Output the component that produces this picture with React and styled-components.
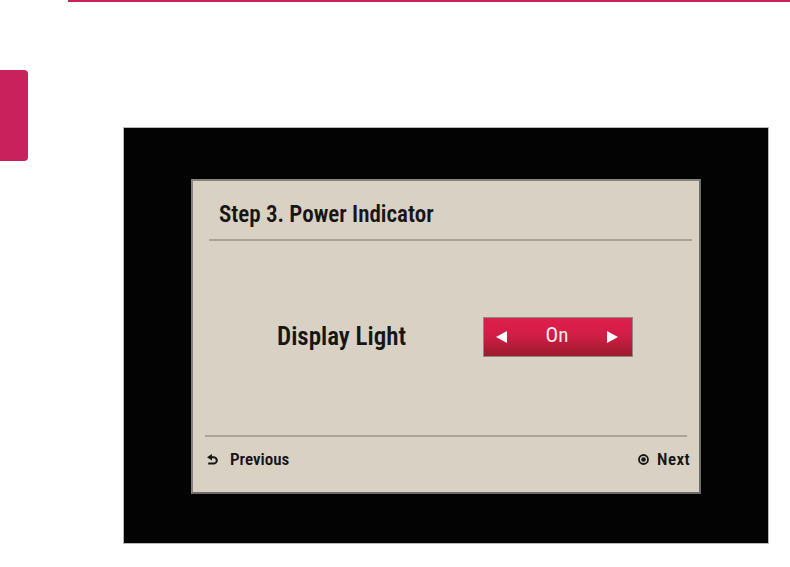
import React from 'react'
import styled, { createGlobalStyle } from 'styled-components'

const Global = createGlobalStyle`
  html, body {
    margin: 0;
    padding: 0;
    background: #fff;
  }
  body {
    font-family: Roboto, "Liberation Sans", sans-serif;
    font-stretch: 75%;
  }
`

const Page = styled.div`
  width: 790px;
  height: 567px;
  overflow: hidden;
`

const TopRule = styled.div`
  margin-left: 68px;
  height: 2px;
  background: #c9215b;
`

const Main = styled.div`
  display: flex;
  align-items: flex-start;
`

const SideTab = styled.div`
  width: 28px;
  height: 91px;
  margin-top: 68px;
  background: #c9215b;
  border-radius: 0 4px 4px 0;
`

const Screen = styled.div`
  box-sizing: border-box;
  width: 646px;
  height: 417px;
  margin-left: 95px;
  margin-top: 125px;
  padding: 51px 0 0 67px;
  background: #030303;
  border: 1px solid #b8b8b8;
`

const Dialog = styled.div`
  box-sizing: border-box;
  width: 510px;
  height: 315px;
  display: flex;
  flex-direction: column;
  background: #d9d1c4;
  border: 2px solid #86837e;
  border-right-color: #6f6c68;
  border-bottom-color: #6f6c68;
  color: #161616;
`

const Header = styled.div`
  box-sizing: border-box;
  height: 58px;
  padding: 21px 0 0 26px;
  font-size: 23px;
  font-weight: 600;
  line-height: 26px;
`

const Rule = styled.div`
  height: 2px;
  background: #aaa498;
  margin: ${p => p.$inset};
`

const Body = styled.div`
  flex: 1;
  display: flex;
  align-items: center;
  padding-left: 84px;
  padding-bottom: 3px;
`

const Label = styled.div`
  width: 206px;
  font-size: 25px;
  font-weight: 600;
`

const Selector = styled.div`
  box-sizing: border-box;
  width: 150px;
  height: 40px;
  display: flex;
  align-items: center;
  justify-content: space-between;
  padding: 0 14px 0 12px;
  background: linear-gradient(#de1f4c 0%, #d21d46 45%, #9b1a2b 100%);
  border: 1px solid #8f8a86;
  color: #fbeef0;
  font-size: 21px;
`

const Value = styled.span`
  line-height: 1;
  margin-top: -2px;
`

const Footer = styled.div`
  box-sizing: border-box;
  height: 55px;
  display: flex;
  align-items: flex-start;
  justify-content: space-between;
  padding: 12px 9px 0 14px;
  font-size: 17px;
  line-height: 20px;
  font-weight: 600;
`

const NavItem = styled.div`
  display: flex;
  align-items: center;
  gap: ${p => p.$gap};
  letter-spacing: ${p => p.$spacing || 'normal'};
`

const Tri = ({ dir }) => (
  <svg width="11" height="12" viewBox="0 0 11 12">
    {dir === 'left'
      ? <polygon points="11,0 11,12 0,6" fill="#fff" />
      : <polygon points="0,0 0,12 11,6" fill="#fff" />}
  </svg>
)

const BackIcon = () => (
  <svg width="11" height="11" viewBox="0 0 11 11">
    <polygon points="0,3.2 5,0 5,6.4" fill="#161616" />
    <path d="M4.5 3.2 H6.6 A3.2 3.2 0 0 1 6.6 9.6 H1.2" fill="none" stroke="#161616" strokeWidth="2" />
  </svg>
)

const OkIcon = () => (
  <svg width="11" height="11" viewBox="0 0 11 11">
    <circle cx="5.5" cy="5.5" r="4.5" fill="none" stroke="#161616" strokeWidth="1.8" />
    <circle cx="5.5" cy="5.5" r="2.3" fill="#161616" />
  </svg>
)

export default function App() {
  return (
    <Page>
      <Global />
      <TopRule />
      <Main>
        <SideTab />
        <Screen>
          <Dialog>
            <Header>Step 3. Power Indicator</Header>
            <Rule $inset="0 7px 0 16px" />
            <Body>
              <Label>Display Light</Label>
              <Selector>
                <Tri dir="left" />
                <Value>On</Value>
                <Tri dir="right" />
              </Selector>
            </Body>
            <Rule $inset="0 12px" />
            <Footer>
              <NavItem $gap="12px">
                <BackIcon />
                <span>Previous</span>
              </NavItem>
              <NavItem $gap="8px" $spacing="0.4px">
                <OkIcon />
                <span>Next</span>
              </NavItem>
            </Footer>
          </Dialog>
        </Screen>
      </Main>
    </Page>
  )
}
